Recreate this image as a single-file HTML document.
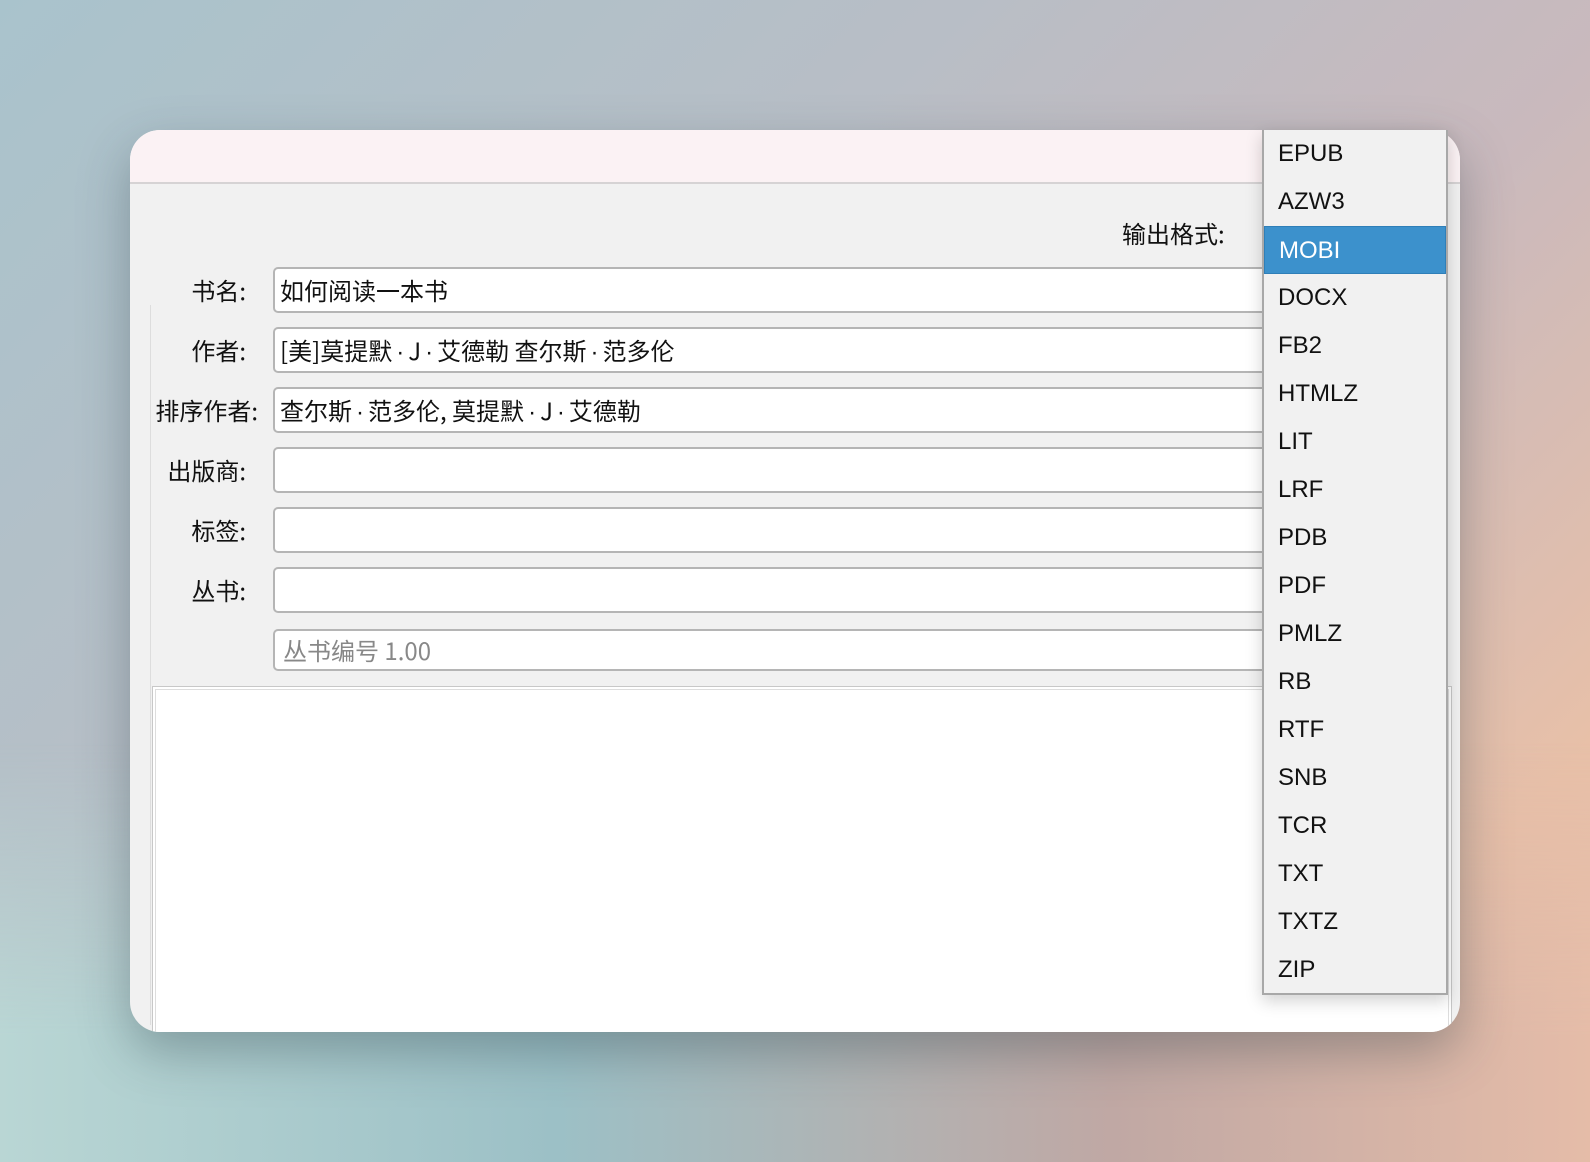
<!DOCTYPE html>
<html><head><meta charset="utf-8"><style>
*{margin:0;padding:0;box-sizing:border-box}
body{width:1590px;height:1162px;overflow:hidden;position:relative;font-family:"Liberation Sans","Noto Sans CJK SC",sans-serif;
background:linear-gradient(135deg,#a9c3cc 0%,#b8bec6 35%,#c9b9bd 60%,#e8c0a8 85%,#e6c0ad 100%);}
.bgb{position:absolute;left:0;right:0;bottom:0;height:420px;background:linear-gradient(90deg,#b9d6d4 0%,#9cc0c6 35%,#c0a8a4 70%,#e5bca8 100%);-webkit-mask-image:linear-gradient(to bottom,transparent,#000 70%);mask-image:linear-gradient(to bottom,transparent,#000 70%)}
.win{position:absolute;left:130px;top:130px;width:1330px;height:902px;border-radius:30px;background:#f1f1f1;overflow:hidden;box-shadow:0 20px 50px rgba(40,60,70,.35)}
.tb{position:absolute;left:0;top:0;right:0;height:54px;background:#fbf2f4;border-bottom:2px solid #d6d3d4}
.cjk{font-family:"Noto Sans CJK SC","Liberation Sans",sans-serif}
.d{font-style:normal;font-family:"Liberation Sans",sans-serif;margin:0 4px}
.lbl{position:absolute;left:0;width:116px;font-size:24px;color:#111;text-align:right;line-height:46px;white-space:nowrap}
.fld{position:absolute;left:143px;width:1000px;height:46px;background:#fff;border:2px solid #b5b5b5;border-radius:5px;font-size:24px;line-height:42px;padding-left:5px;color:#111;white-space:nowrap;overflow:hidden}
.big{position:absolute;left:22px;top:556px;width:1300px;height:400px;background:#fff;border:1px solid #c8c8c8;outline:1px solid #ddd;outline-offset:-4px}
.dd{position:absolute;left:1262px;top:130px;width:186px;height:865px;background:#f1f1f1;border:2px solid #a8a8a8;border-top:none;box-shadow:0 6px 16px rgba(0,0,0,.18)}
.it{height:48px;line-height:48px;font-size:24px;padding-left:14px;color:#111}
.sel{background:#3c91cc;color:#fff;border:1px solid #2f7fb8}
</style></head><body>
<div class="bgb"></div>
<div class="win">
<div class="tb"></div>
<div style="position:absolute;left:20px;top:175px;width:1px;height:720px;background:#ddd"></div>
<div class="cjk" style="position:absolute;left:992px;top:80px;font-size:24px;color:#111;line-height:46px">输出格式:</div>
<div class="lbl cjk" style="top:137px">书名:</div>
<div class="lbl cjk" style="top:197px">作者:</div>
<div class="lbl cjk" style="top:257px;width:128px">排序作者:</div>
<div class="lbl cjk" style="top:317px">出版商:</div>
<div class="lbl cjk" style="top:377px">标签:</div>
<div class="lbl cjk" style="top:437px">丛书:</div>
<div class="fld cjk" style="top:137px">如何阅读一本书</div>
<div class="fld cjk" style="top:197px">[美]莫提默<i class="d">·</i>J<i class="d">·</i>艾德勒 查尔斯<i class="d">·</i>范多伦</div>
<div class="fld cjk" style="top:257px">查尔斯<i class="d">·</i>范多伦, 莫提默<i class="d">·</i>J<i class="d">·</i>艾德勒</div>
<div class="fld" style="top:317px"></div>
<div class="fld" style="top:377px"></div>
<div class="fld" style="top:437px"></div>
<div class="fld cjk" style="top:499px;height:42px;line-height:38px;color:#888;padding-left:8px">丛书编号 1.00</div>
<div class="big"></div>
</div>
<div class="dd">
<div class="it">EPUB</div><div class="it">AZW3</div><div class="it sel">MOBI</div><div class="it">DOCX</div><div class="it">FB2</div><div class="it">HTMLZ</div><div class="it">LIT</div><div class="it">LRF</div><div class="it">PDB</div><div class="it">PDF</div><div class="it">PMLZ</div><div class="it">RB</div><div class="it">RTF</div><div class="it">SNB</div><div class="it">TCR</div><div class="it">TXT</div><div class="it">TXTZ</div><div class="it">ZIP</div>
</div>
</body></html>
